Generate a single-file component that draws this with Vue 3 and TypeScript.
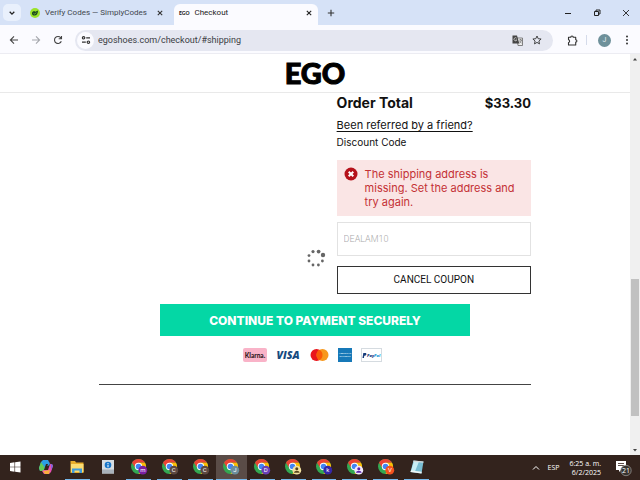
<script setup lang="ts">
import { ref } from 'vue'

interface Task {
  name: string
  kind: 'windows' | 'copilot' | 'folder' | 'info' | 'chrome' | 'notes'
  badge?: string
  color?: string
  ink?: string
  open?: boolean
  active?: boolean
}

const tasks: Task[] = [
  { name: 'Start', kind: 'windows' },
  { name: 'Copilot', kind: 'copilot' },
  { name: 'File Explorer', kind: 'folder', open: true },
  { name: 'Assistant', kind: 'info' },
  { name: 'Chrome M', kind: 'chrome', badge: 'm', color: '#7b1fa2', ink: '#fff', open: true },
  { name: 'Chrome C', kind: 'chrome', badge: 'C', color: '#5d4942', ink: '#fff', open: true },
  { name: 'Chrome C2', kind: 'chrome', badge: 'C', color: '#5d4942', ink: '#fff', open: true },
  { name: 'Chrome J', kind: 'chrome', badge: 'J', color: '#6d8f9e', ink: '#fff', open: true, active: true },
  { name: 'Chrome D', kind: 'chrome', badge: 'D', color: '#6a3fb5', ink: '#fff', open: true },
  { name: 'Chrome guest', kind: 'chrome', color: '#f3e2a0', ink: '#54431c', open: true },
  { name: 'Chrome K', kind: 'chrome', badge: 'k', color: '#3626a7', ink: '#fff', open: true },
  { name: 'Chrome person', kind: 'chrome', color: '#f1e8ff', ink: '#5a22a8', open: true },
  { name: 'Chrome V', kind: 'chrome', badge: 'V', color: '#f4511e', ink: '#fff', open: true },
  { name: 'Notepad', kind: 'notes', open: true },
]

const dots = [
  { x: 17, y: 6, r: 2.2 },
  { x: 12.6, y: 2.6, r: 1.9 },
  { x: 7, y: 2.6, r: 1.6 },
  { x: 3, y: 6.6, r: 1.4 },
  { x: 3, y: 12, r: 1.4 },
  { x: 7, y: 16, r: 1.4 },
  { x: 12.4, y: 16, r: 1.4 },
  { x: 16.4, y: 12, r: 1.4 },
]

const coupon = ref('DEALAM10')
const url = ref('egoshoes.com/checkout/#shipping')
</script>

<template>
  <div class="screen">
    <header class="tabs">
      <button class="tab-search" aria-label="Search tabs">
        <svg width="8" height="8" viewBox="0 0 8 8"><path d="M1.7 2.8 4 5.1 6.3 2.8" fill="none" stroke="#222" stroke-width="1.3" /></svg>
      </button>
      <div class="tab">
        <svg width="10" height="10" viewBox="0 0 10 10">
          <circle cx="5" cy="5" r="5" fill="#9be329" />
          <path d="M2 5.2c.2-2 2.2-2.5 3.4-1.5L8 2.5C8 5.6 6.6 7.7 4.4 7.6 3 7.5 1.900 6.6 2 5.2z" fill="#17451c" />
          <path d="m3.5 5.3 1 .9L6.2 4.5" fill="none" stroke="#9be329" stroke-width=".7" />
        </svg>
        <span class="tab-name">Verify Codes — SimplyCodes</span>
        <button class="close" aria-label="Close Verify Codes tab">
          <svg width="6" height="6" viewBox="0 0 6 6"><path d="m.8.8 4.4 4.4M5.2.8.8 5.2" stroke="#333" stroke-width="1.1" /></svg>
        </button>
      </div>
      <div class="tab active">
        <span class="mini-ego">EGO</span>
        <span class="tab-name">Checkout</span>
        <button class="close" aria-label="Close Checkout tab">
          <svg width="6" height="6" viewBox="0 0 6 6"><path d="m.8.8 4.4 4.4M5.2.8.8 5.2" stroke="#222" stroke-width="1.1" /></svg>
        </button>
      </div>
      <button class="new-tab" aria-label="New tab">
        <svg width="8" height="8" viewBox="0 0 8 8"><path d="M4 .8v6.4M.8 4h6.4" stroke="#333" stroke-width="1.1" /></svg>
      </button>
      <div class="window-buttons">
        <button aria-label="Minimize"><svg width="8" height="8" viewBox="0 0 8 8"><path d="M1 4.5h6" stroke="#222" /></svg></button>
        <button aria-label="Restore"><svg width="8" height="8" viewBox="0 0 8 8"><path d="M1.5 2.5h4v4h-4zM3 2.5V1h4v4H5.5" fill="none" stroke="#222" /></svg></button>
        <button aria-label="Close window"><svg width="8" height="8" viewBox="0 0 8 8"><path d="m1 1 6 6M7 1 1 7" stroke="#222" stroke-width=".9" /></svg></button>
      </div>
    </header>

    <nav class="toolbar">
      <button class="nav-button" aria-label="Back"><svg width="10" height="10" viewBox="0 0 10 10"><path d="M9 5H1.6M5 1.4 1.4 5 5 8.6" fill="none" stroke="#444" stroke-width="1.1" /></svg></button>
      <button class="nav-button" aria-label="Forward"><svg width="10" height="10" viewBox="0 0 10 10"><path d="M1 5h7.4M5 1.4 8.6 5 5 8.6" fill="none" stroke="#a5a7ad" stroke-width="1.1" /></svg></button>
      <button class="nav-button" aria-label="Reload"><svg width="10" height="10" viewBox="0 0 10 10"><path d="M8.3 6.2A3.5 3.5 0 1 1 7.7 2.7L8.3 3.5M8.5 1v2.8H5.7" fill="none" stroke="#444" stroke-width="1.1" /></svg></button>
      <div class="address">
        <button class="site-info" aria-label="Site information">
          <svg width="10" height="10" viewBox="0 0 10 10" fill="none" stroke="#333" stroke-width="1.2"><path d="M5.2 2.8H9M1 7.2h3.8" /><circle cx="2.6" cy="2.8" r="1.2" /><circle cx="7.4" cy="7.2" r="1.2" /></svg>
        </button>
        <input v-model="url" class="url" aria-label="Address" />
        <button class="nav-button" aria-label="Translate this page">
          <svg width="11" height="11" viewBox="0 0 11 11"><path d="M5 3h5.5v7.5H6z" fill="#eee" stroke="#666" stroke-width=".8" /><path d="M.5.5H5L7.3 8.5H.5z" fill="#454545" /><path d="M4.6 3.2A1.5 1.5 0 1 0 4.8 5H3.6" fill="none" stroke="#eee" stroke-width=".7" /><path d="M7 5h3M8.5 4v1m1 0c-.3 1.5-1.3 2.5-2 3m0-2 2 2.3" fill="none" stroke="#555" stroke-width=".6" /></svg>
        </button>
        <button class="nav-button" aria-label="Bookmark this page">
          <svg width="10" height="10" viewBox="0 0 10 10"><path d="m5 1 1.2 2.7 2.9.3L6.9 6l.6 2.9L5 7.4 2.5 8.9 3.1 6 .9 4l2.9-.3z" fill="none" stroke="#333" stroke-width=".9" /></svg>
        </button>
      </div>
      <button class="nav-button" aria-label="Extensions">
        <svg width="11" height="11" viewBox="0 0 11 11"><path d="M1.5 2.2h2.3a1.2 1.2 0 0 1 2.4 0h2.5v2.5a1.2 1.2 0 0 1 0 2.4V10H1.5V7.5c1.5-.2 1.5-2.5 0-2.7z" fill="none" stroke="#333" stroke-width="1.1" stroke-linejoin="round" /></svg>
      </button>
      <span class="divider"></span>
      <button class="avatar" aria-label="Profile">J</button>
      <button class="nav-button" aria-label="Browser menu">
        <svg width="10" height="10" viewBox="0 0 10 10" fill="#333"><circle cx="5" cy="1.5" r="1" /><circle cx="5" cy="5" r="1" /><circle cx="5" cy="8.5" r="1" /></svg>
      </button>
    </nav>

    <div class="viewport">
      <main class="page">
        <div class="brand"><a href="#home">EGO</a></div>
        <div class="checkout">
          <section class="summary">
            <div class="total"><span>Order Total</span><span class="price">$33.30</span></div>
            <a class="referral" href="#referral">Been referred by a friend?</a>
            <label class="discount" for="coupon">Discount Code</label>
            <div class="alert" role="alert">
              <svg width="14" height="14" viewBox="0 0 14 14"><circle cx="7" cy="7" r="6.5" fill="#b5121b" /><path d="m4.7 4.7 4.6 4.6M9.3 4.7 4.7 9.3" stroke="#fff" stroke-width="2" /></svg>
              <p>The shipping address is missing. Set the address and try again.</p>
            </div>
            <input id="coupon" v-model="coupon" class="coupon" />
            <button class="cancel">CANCEL COUPON</button>
          </section>
          <button class="continue">CONTINUE TO PAYMENT SECURELY</button>
          <div class="payments">
            <svg width="24" height="14" viewBox="0 0 24 14" role="img" aria-label="Klarna"><rect width="24" height="14" rx="2" fill="#f9b3c8" /><text x="12" y="9.5" text-anchor="middle" font-family="Lato, sans-serif" font-weight="900" font-size="6.5" fill="#321923">Klarna.</text></svg>
            <svg width="25" height="14" viewBox="0 0 25 14" role="img" aria-label="Visa"><text x="12" y="11" text-anchor="middle" font-family="Open Sans, sans-serif" font-style="italic" font-weight="800" font-size="10.5" fill="#164a80">VISA</text></svg>
            <svg width="19" height="14" viewBox="0 0 19 14" role="img" aria-label="Mastercard"><circle cx="6.5" cy="7" r="6" fill="#e9151b" /><circle cx="12.5" cy="7" r="6" fill="#f7981d" /><path d="M9.5 1.8a6 6 0 0 1 0 10.4 6 6 0 0 1 0-10.4z" fill="#fa5b08" /></svg>
            <svg width="14" height="14" viewBox="0 0 14 14" role="img" aria-label="American Express"><rect width="14" height="14" fill="#1779b8" /><g font-family="Liberation Sans, sans-serif" font-weight="700" fill="#d8edf8" font-size="2.3" text-anchor="middle"><text x="7" y="6.3">AMERICAN</text><text x="7" y="9.3">EXPRESS</text></g></svg>
            <svg width="21" height="14" viewBox="0 0 21 14" role="img" aria-label="PayPal"><rect x=".5" y=".5" width="20" height="13" fill="#fff" stroke="#d5dbe0" /><path d="M2.3 5h2c1.7 0 1.5 2.7-.5 2.7H3.2L3 10H1.5z" fill="#173b7a" /><text x="6" y="9" font-family="Open Sans, sans-serif" font-style="italic" font-weight="800" font-size="4" fill="#173b7a">Pay<tspan fill="#249bd7">Pal</tspan></text></svg>
          </div>
          <hr />
        </div>
        <svg class="spinner" width="20" height="20" viewBox="0 0 20 20" role="img" aria-label="Loading"><circle v-for="(d, i) in dots" :key="i" :cx="d.x" :cy="d.y" :r="d.r" fill="#666" /></svg>
      </main>
      <div class="scrollbar" aria-hidden="true">
        <svg width="10" height="10" viewBox="0 0 10 10"><path d="m3 6.5 2-2.5 2 2.5z" fill="#444" /></svg>
        <div class="above"></div>
        <div class="thumb"></div>
        <div class="below"></div>
        <svg width="10" height="10" viewBox="0 0 10 10"><path d="m3 4 2 2.5L7 4z" fill="#444" /></svg>
      </div>
    </div>

    <footer class="taskbar">
      <div class="tasks">
        <button v-for="t in tasks" :key="t.name" :aria-label="t.name" class="task" :class="{ open: t.open, current: t.active }">
          <svg v-if="t.kind === 'windows'" width="18" height="18" viewBox="0 0 18 18"><path d="m4 5 4.5-.7v4.4H4zm5.1-.8L14.5 3.5v5.2H9.1zM4 9.3h4.5v4.4L4 13zm5.1 0h5.4v5.2l-5.4-.8z" fill="#fff" /></svg>
          <svg v-else-if="t.kind === 'copilot'" width="18" height="18" viewBox="0 0 18 18">
            <path d="M6 2h5l2 4-2 2H9l-2 5H3L2 10 4 4z" fill="#2c9de5" /><path d="M4 4 2 10l1 3h4l1-3z" fill="#62c957" /><path d="M7 12h4l2-6h2l1 2-2 6-2 2H7l-2-3z" fill="#e84fb2" /><path d="m6 13 2 3h4l1-4z" fill="#f7ae3d" /><path d="m11 2 2 4h2l1 2-2 4 0-5z" fill="#8065db" /><path d="m9 6-2 6h2l2-6z" fill="#35221c" />
          </svg>
          <svg v-else-if="t.kind === 'folder'" width="18" height="18" viewBox="0 0 18 18"><path d="M2.5 3H7l1 1.5h7.5V15h-13z" fill="#e8ae2c" /><path d="M3 6h12.5v8H3z" fill="#fbdc73" /><path d="M4 15v-4.5h10V15h-2.5v-2.5h-5V15z" fill="#3f9bdc" /></svg>
          <svg v-else-if="t.kind === 'info'" width="18" height="18" viewBox="0 0 18 18"><rect x="3" y="2" width="12" height="13.5" fill="#d7dde2" /><path d="M3 11.5h12v4H3z" fill="#a9b2bb" /><circle cx="9" cy="7" r="3.3" fill="#1976c9" /><path d="M9 5v1m0 .7v2.6" stroke="#fff" /></svg>
          <svg v-else-if="t.kind === 'chrome'" width="18" height="18" viewBox="0 0 18 18">
            <circle cx="8.5" cy="8.5" r="7.5" fill="#33a852" /><path d="M2 4.7A7.5 7.5 0 0 1 15 4.7H8.5L5.5 10.3z" fill="#ea4335" /><path d="M8.5 4.7H15A7.5 7.5 0 0 1 8.5 16l3-5.8z" fill="#fbbc05" /><circle cx="8.5" cy="8.5" r="3.7" fill="#fff" /><circle cx="8.5" cy="8.5" r="2.8" fill="#4285f4" />
            <circle cx="12.8" cy="12.2" r="4.4" :fill="t.color" />
            <text v-if="t.badge" x="12.8" y="14.2" text-anchor="middle" font-family="Roboto, sans-serif" font-size="6" :fill="t.ink">{{ t.badge }}</text>
            <g v-else :fill="t.ink"><circle cx="12.8" cy="10.7" r="1.5" /><path d="M10 14.700c0-2.700 5.600-2.700 5.600 0z" /></g>
          </svg>
          <svg v-else width="18" height="18" viewBox="0 0 18 18"><path d="m5.5 2.5 10 1-2 12-11-1.5z" fill="#79bdd2" /><path d="m6 3 5 .5-4 10-4-.5z" fill="#c7edf4" /><path d="m5.5 2.5 10 1-.2 1.3-10.2-1z" fill="#d7dada" /><path d="m3 12.5 10.8 1.3-.3 1.7-11-1.5z" fill="#eff6f8" /></svg>
        </button>
      </div>
      <div class="tray">
        <button aria-label="Show hidden icons"><svg width="8" height="8" viewBox="0 0 8 8"><path d="M1 5.5 4 2.5l3 3" fill="none" stroke="#fff" /></svg></button>
        <span>ESP</span>
        <time datetime="2025-02-06T06:25"><span>6:25 a. m.</span><span>6/2/2025</span></time>
        <button aria-label="21 notifications">
          <svg width="18" height="18" viewBox="0 0 18 18"><path d="M2 2h10v9H7l-2 2v-2H2z" fill="#fff" /><path d="M4 4.5h6M4 6.5h6" stroke="#35221c" stroke-width=".8" /><circle cx="12" cy="11.5" r="5.2" fill="#36332f" stroke="#a3a09e" stroke-width=".7" /><text x="12" y="14" text-anchor="middle" font-family="Open Sans, sans-serif" font-size="7" fill="#fff">21</text></svg>
        </button>
      </div>
    </footer>
  </div>
</template>

<style>
body {
  margin: 0;
}
</style>

<style scoped>
.screen {
  display: flex;
  flex-direction: column;
  min-height: 100vh;
  background: #fff;
  color: #111;
  font-family: Inter, sans-serif;
}
* {
  box-sizing: border-box;
}
button,
input {
  margin: 0;
  padding: 0;
  border: 0;
  background: none;
  color: inherit;
  font: inherit;
}
button {
  display: grid;
  place-items: center;
}
svg {
  display: block;
  flex: none;
}
.tabs {
  display: flex;
  align-items: center;
  height: 25px;
  padding-left: 3px;
  background: #d6e2f7;
  font: 8px/12px Roboto, sans-serif;
}
.tab-search {
  width: 18px;
  height: 17px;
  border-radius: 5px;
  background: #e9f0fc;
}
.tab {
  display: flex;
  align-items: center;
  gap: 5px;
  width: 144px;
  height: 21px;
  margin-top: 4px;
  padding: 0 6px 4px 9px;
  color: #41464e;
}
.tab.active {
  padding-left: 5px;
  border-radius: 6px 6px 0 0;
  background: #fbfbff;
  color: #222;
}
.tab:not(.active) {
  width: 153px;
  padding-right: 11px;
}
.tab-name {
  flex: 1;
  white-space: nowrap;
}
.mini-ego {
  font: 900 5px/8px Lato, sans-serif;
}
.new-tab {
  width: 26px;
  height: 20px;
}
.window-buttons {
  display: flex;
  margin-left: auto;
}
.window-buttons button {
  width: 29px;
  height: 24px;
}
.toolbar {
  display: flex;
  align-items: center;
  gap: 6px;
  height: 29px;
  padding: 2px 5px 0 6px;
  background: #fbfbff;
  border-bottom: 1px solid #ececf2;
}
.nav-button {
  width: 16px;
  height: 18px;
}
.address {
  display: flex;
  flex: 1;
  align-items: center;
  gap: 4px;
  height: 21px;
  margin: 0 5px 0 3px;
  padding: 0 8px 0 2px;
  border-radius: 11px;
  background: #e5e7f1;
}
.site-info {
  width: 17px;
  height: 17px;
  border-radius: 50%;
  background: #fbfbff;
}
.url {
  flex: 1;
  min-width: 0;
  color: #3b3d44;
  font: 9px/14px Roboto, sans-serif;
}
.divider {
  width: 1px;
  height: 10px;
  background: #d5dbea;
}
.avatar {
  width: 13px;
  height: 13px;
  margin: 0 2px 0 5px;
  border-radius: 50%;
  background: #6e909a;
  color: #e5eef1;
  font: 7px/13px Roboto, sans-serif;
}
.viewport {
  display: flex;
  flex: 1;
}
.page {
  position: relative;
  flex: 1;
}
.brand {
  display: grid;
  place-items: center;
  height: 39px;
  border-bottom: 1px solid #e9e9e9;
}
.brand a {
  color: #000;
  font: 900 29px/34px Lato, sans-serif;
  text-decoration: none;
  -webkit-text-stroke: 1px #000;
}
.checkout {
  display: flex;
  flex-direction: column;
  align-items: center;
  margin: 1px 99px 0;
}
.summary {
  display: flex;
  flex-direction: column;
  align-self: flex-end;
  width: 45%;
}
.total {
  display: flex;
  justify-content: space-between;
  font-size: 14px;
  line-height: 18px;
  font-weight: 700;
}
.price {
  font-size: 13px;
}
.referral {
  align-self: flex-start;
  margin-top: 4px;
  color: inherit;
  font-size: 11px;
  line-height: 18px;
  text-underline-offset: 2px;
  white-space: nowrap;
}
.discount {
  font-size: 10px;
  line-height: 16px;
}
.alert {
  display: flex;
  gap: 7px;
  margin-top: 10px;
  padding: 7px;
  background: #fae5e5;
  color: #c43135;
  font-size: 11px;
  line-height: 14px;
}
.alert p {
  margin: 0;
}
.coupon {
  width: 100%;
  height: 34px;
  margin-top: 6px;
  padding: 0 6px;
  border: 1px solid #e2e2e2;
  color: #aaa;
  font: 300 9px/14px Roboto, sans-serif;
}
.cancel {
  height: 28px;
  margin-top: 10px;
  border: 1px solid #333;
  font: 400 10px/14px Roboto, sans-serif;
}
.continue {
  width: 310px;
  max-width: 100%;
  height: 32px;
  margin-top: 10px;
  background: #04d7a5;
  color: #fff;
  font-size: 12px;
  font-weight: 800;
}
.payments {
  display: flex;
  align-items: center;
  gap: 9px;
  margin-top: 12px;
  padding-right: 6px;
}
hr {
  width: 100%;
  margin: 22px 0;
  border: 0;
  border-top: 1px solid #444;
}
.spinner {
  position: absolute;
  top: 195px;
  left: calc(50% - 9px);
}
.scrollbar {
  display: flex;
  flex-direction: column;
  width: 10px;
  background: #f0f0f0;
}
.above {
  flex: 215;
}
.thumb {
  flex: 137;
  margin: 0 1px;
  background: #c1c1c1;
}
.below {
  flex: 29;
}
.taskbar {
  display: flex;
  justify-content: space-between;
  height: 25px;
  background: #33231d;
  color: #fff;
}
.tasks {
  display: grid;
  grid-template-columns: repeat(14, 1fr);
  width: 432px;
}
.task {
  margin: 0 3px;
  border-bottom: 1px solid transparent;
}
.task.open {
  border-bottom-color: #76b9ed;
}
.task.current {
  margin: 0;
  background: #5a4c47;
}
.tray {
  display: flex;
  align-items: center;
  gap: 8px;
  padding-right: 8px;
  font: 7px/9px "Open Sans", sans-serif;
}
.tray time {
  display: grid;
  margin: 0 5px 0 2px;
  text-align: right;
}
</style>
